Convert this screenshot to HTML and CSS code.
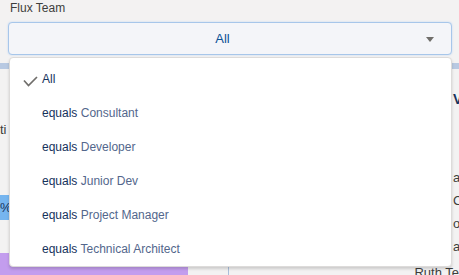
FILE: index.html
```html
<!DOCTYPE html>
<html lang="en">
<head>
<meta charset="utf-8">
<title>Flux Team filter</title>
<link rel="stylesheet" href="styles.css">
</head>
<body>
<div class="page">
  <div class="label">Flux Team</div>
  <div class="select">
    <span class="select-value">All</span>
    <span class="caret"></span>
  </div>
  <div class="canvas">
    <div class="col col-left">
      <div class="strip"></div>
      <div class="frag frag-ti">ti</div>
      <div class="bar-blue">%</div>
      <div class="bar-purple"></div>
    </div>
    <div class="col col-right">
      <div class="strip"></div>
      <div class="frag frag-v">V</div>
      <div class="letters">
        <div>a</div>
        <div>C</div>
        <div>o</div>
        <div>a</div>
      </div>
      <div class="bottom-row">
        <span class="square"></span>
        <span class="name">Ruth Te</span>
      </div>
    </div>
  </div>

  <ul class="menu">
    <li class="item selected">
      <svg class="check" width="15" height="11" viewBox="0 0 15 11"><path d="M1 4.5 L5.5 9.5 L14 1" fill="none" stroke="#706e6b" stroke-width="1.7"/></svg>
      <span class="op">All</span>
    </li>
    <li class="item"><span class="op">equals</span> <span class="val">Consultant</span></li>
    <li class="item"><span class="op">equals</span> <span class="val">Developer</span></li>
    <li class="item"><span class="op">equals</span> <span class="val">Junior Dev</span></li>
    <li class="item"><span class="op">equals</span> <span class="val">Project Manager</span></li>
    <li class="item"><span class="op">equals</span> <span class="val">Technical Architect</span></li>
  </ul>
</div>
</body>
</html>
```

FILE: styles.css
```css
* { box-sizing: border-box; }
html, body {
  margin: 0;
  padding: 0;
  height: 275px;
  overflow: hidden;
}
body {
  background: #f3f2f2;
  font-family: "Liberation Sans", Arial, sans-serif;
  font-size: 12px;
  color: #3e3e3c;
}
.page {
  position: relative;
  height: 275px;
}
.label {
  padding-left: 10px;
  line-height: 16px;
  height: 16px;
  margin-bottom: 6px;
  color: #3e3e3c;
  font-size: 12px;
}
.select {
  position: relative;
  margin: 0 7px 0 8px;
  height: 33px;
  border: 1px solid #a7c6ea;
  border-radius: 4px;
  background: #f4f5f9;
  box-shadow: 0 0 2px 0 #bcd5f1;
  display: flex;
  align-items: center;
  justify-content: center;
  padding-right: 15px;
}
.select-value {
  color: #0b5196;
  font-size: 13px;
}
.caret {
  position: absolute;
  right: 17px;
  top: 14px;
  width: 0;
  height: 0;
  border-left: 4.5px solid transparent;
  border-right: 4.5px solid transparent;
  border-top: 5px solid #706e6b;
}

.canvas {
  margin-top: 7px;
  display: grid;
  grid-template-columns: 220px 231px;
  column-gap: 8px;
}
.col { display: flex; flex-direction: column; }
.strip {
  margin-top: 1px;
  height: 6px;
  background: #b8c9e2;
}
.frag {
  line-height: 16px;
  height: 16px;
  color: #3e3e3c;
  font-size: 13px;
}
.frag-ti { margin-top: 53px; padding-left: 0; }
.bar-blue {
  margin-top: 57px;
  height: 25px;
  width: 200px;
  background: #76b5ef;
  line-height: 25px;
  font-size: 13px;
  color: #16325c;
}
.bar-purple {
  margin-top: 33px;
  height: 30px;
  width: 188px;
  background: #c39dee;
}
.frag-v {
  margin-top: 22px;
  padding-left: 225px;
  font-weight: bold;
  font-size: 14px;
  color: #16325c;
}
.letters {
  margin-top: 59px;
  padding-left: 225px;
  line-height: 23px;
  font-size: 13px;
  color: #3e3e3c;
}
.bottom-row {
  margin-top: 7px;
  display: flex;
  align-items: flex-start;
  height: 14px;
}
.square {
  width: 8px;
  height: 10px;
  margin-top: 1px;
  background: #a9bedb;
}
.name {
  margin-left: 186px;
  font-size: 13px;
  line-height: 16px;
  color: #3e3e3c;
  white-space: nowrap;
}

.menu {
  position: absolute;
  top: 57px;
  left: 9px;
  width: 443px;
  margin: 0;
  padding: 4px 0 0;
  list-style: none;
  background: #fff;
  border: 1px solid #dddbda;
  border-radius: 4px;
  box-shadow: 0 2px 3px 0 rgba(0, 0, 0, 0.16);
}
.item {
  position: relative;
  height: 34px;
  line-height: 34px;
  padding-left: 32px;
  font-size: 12px;
  white-space: nowrap;
}
.check {
  position: absolute;
  left: 13px;
  top: 14px;
}
.op { color: #16325c; }
.val { color: #53678c; }
```
